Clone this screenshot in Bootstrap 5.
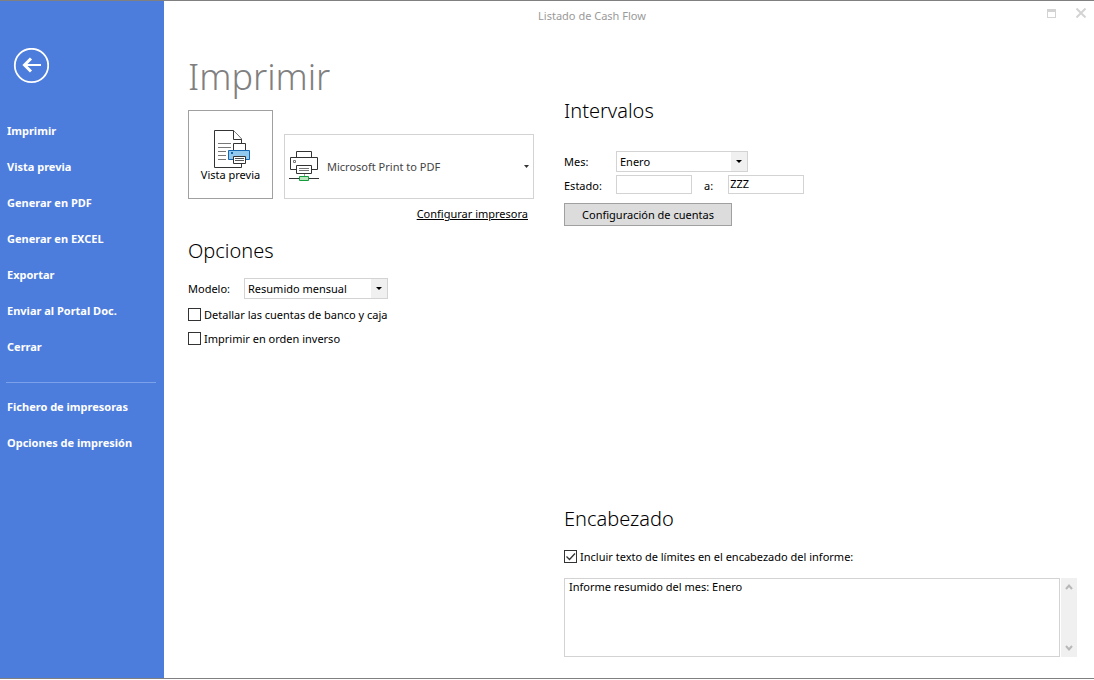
<!DOCTYPE html>
<html lang="es">
<head>
<meta charset="utf-8">
<meta name="viewport" content="width=device-width, initial-scale=1">
<title>Listado de Cash Flow</title>
<link href="https://cdn.jsdelivr.net/npm/bootstrap@5.3.0/dist/css/bootstrap.min.css" rel="stylesheet">
<style>
  body { font-family: "Noto Sans", "Open Sans", sans-serif; font-size: 11px; line-height: 16px; color: #000; background: #fff; }
  .app-window { min-height: calc(100vh - 1px); border-top: 1px solid #808080; border-bottom: 1px solid #808080; }
  .side-menu { width: 164px; flex: none; background: #4d7ddc; padding-top: 47px; }
  .back-btn { width: 36px; height: 36px; margin-left: 13px; margin-bottom: 29px; }
  .side-menu .nav-link { color: #fff; font-size: 11px; font-weight: 700; line-height: 16px; padding: 10px 7px; }
  .side-menu hr { margin: 17px 8px 6px 6px; border-color: #8fb0f0; opacity: .7; }
  .title-bar { height: 30px; color: #9a9a9a; }
  .window-tools { width: 74px; height: 24px; padding-right: 7px; gap: 19px; }
  .sheet { display: grid; grid-template-columns: 346px minmax(0, 1fr); column-gap: 30px; padding: 0 17px 21px 24px; }
  h1 { font-size: 36px; font-weight: 300; line-height: 48px; color: #808080; margin: 22px 0 9px; }
  h2 { font-size: 20px; font-weight: 300; line-height: 28px; margin: 0; }
  .plain-btn { background: none; border: 0; padding: 0; color: inherit; display: flex; }
  .preview-btn { width: 85px; height: 89px; border: 1px solid #a0a0a0; background: #fff; font-size: 11px; line-height: 14px; color: #000; padding: 3px 0 0; }
  .preview-btn svg { margin-left: 3px; }
  .printer-btn { height: 65px; max-width: 250px; border: 1px solid #d3d3d3; background: #fff; color: #444; padding: 0 4px; }
  .setup-link { color: #000; margin: 7px 6px 0 0; }
  .options-title { margin-top: 15px; }
  .model-row { margin-top: 13px; }
  .model-label { width: 56px; }
  .model-combo { width: 144px; }
  .right-side { padding-top: 66px; }
  .combo { appearance: none; height: 21px; border: 1px solid #d3d3d3; border-radius: 0; padding: 0 20px 0 3px; line-height: 19px; color: #000;
    background: #fff url("data:image/svg+xml,%3Csvg xmlns='http://www.w3.org/2000/svg' width='16' height='19'%3E%3Cpath fill='%23f0f0f0' d='M0 0h16v19H0z'/%3E%3Cpath d='M5 8h6L8 11z'/%3E%3C/svg%3E") right center no-repeat; }
  .month-row { margin-top: 26px; }
  .month-combo { width: 132px; }
  .field-row { display: grid; grid-template-columns: 52px auto auto 1fr; align-items: center; }
  .state-row { margin-top: 3px; }
  .state-row label { padding-top: 2px; }
  .state-row .to-label { padding-left: 12px; padding-right: 15px; }
  .entry { width: 76px; height: 19px; border: 1px solid #d3d3d3; padding: 0 1px 2px; }
  .tick { appearance: none; width: 13px; height: 13px; flex: none; margin: 1px 0 0; border: 1px solid #333; background: #fff center no-repeat; }
  .tick:checked { background-image: url("data:image/svg+xml,%3Csvg xmlns='http://www.w3.org/2000/svg' width='11' height='11'%3E%3Cpath d='M1.500 5.500l3 3 5.500-6' fill='none' stroke='%23333' stroke-width='1.300'/%3E%3C/svg%3E"); }
  .tick-row { display: flex; align-items: flex-start; gap: 3px; padding-top: 1px; margin-top: 7px; }
  .accounts-btn { width: 168px; height: 23px; margin-top: 9px; border: 1px solid #a0a0a0; background: #dcdcdc; color: #000; padding: 0; }
  .header-check { margin: 15px 0 13px; }
  .header-text { height: 79px; border: 1px solid #d3d3d3; padding: 0 4px; line-height: 16px; resize: none; overflow: hidden; }
  .scroll-track { width: 16px; margin-left: 1px; background: #f0f0f0; padding: 5px 0; }
</style>
</head>
<body>
<div class="app-window d-flex">
  <nav class="side-menu" aria-label="Menú de impresión">
    <button class="plain-btn back-btn" type="button" aria-label="Volver">
      <svg width="36" height="36" viewBox="0 0 36 36" fill="none" stroke="#fff"><circle cx="18.500" cy="17.500" r="16.700" stroke-width="1.800"/><path d="M28 17H11" stroke-width="2"/><path d="M18 10.500L11.500 17l6.500 6.500" stroke-width="3"/></svg>
    </button>
    <div class="nav flex-column">
      <a class="nav-link" href="#">Imprimir</a>
      <a class="nav-link" href="#">Vista previa</a>
      <a class="nav-link" href="#">Generar en PDF</a>
      <a class="nav-link" href="#">Generar en EXCEL</a>
      <a class="nav-link" href="#">Exportar</a>
      <a class="nav-link" href="#">Enviar al Portal Doc.</a>
      <a class="nav-link" href="#">Cerrar</a>
    </div>
    <hr>
    <div class="nav flex-column">
      <a class="nav-link" href="#">Fichero de impresoras</a>
      <a class="nav-link" href="#">Opciones de impresión</a>
    </div>
  </nav>
  <div class="flex-grow-1 d-flex flex-column">
    <header class="title-bar d-flex">
      <div class="flex-grow-1 text-center align-self-center">Listado de Cash Flow</div>
      <div class="window-tools d-flex justify-content-end align-items-center">
        <button class="plain-btn" type="button" aria-label="Maximizar"><svg width="9" height="9" fill="#d3d3d3"><path fill-rule="evenodd" d="M0 0h9v9H0zM1 3v5h7V3z"/></svg></button>
        <button class="plain-btn" type="button" aria-label="Cerrar ventana"><svg width="12" height="10" fill="none" stroke="#d3d3d3" stroke-width="2"><path d="M1.500.500l9 9M10.500.500l-9 9"/></svg></button>
      </div>
    </header>
    <main class="sheet flex-grow-1">
      <section>
        <h1>Imprimir</h1>
        <div class="d-flex align-items-end">
          <button class="preview-btn d-flex flex-column align-items-center justify-content-center" type="button">
            <svg width="36" height="38" viewBox="1 0 36 38" fill="#fff" stroke="#333">
              <path d="M1.500.500h19l8 8.500v28.500h-27z"/><path d="M20.500.500v9h8"/><path d="M5 13.500h13M5 17.500h13M5 21.500h8M5 25.500h8M5 29.500h8" stroke="#777"/>
              <path d="M20.500 13.500h12v8h-12z"/><path d="M15.500 20.500h21v9h-21z" fill="#93c9ef" stroke="#1567b0"/><path d="M18 22h2v2h-2z" fill="#1567b0" stroke="none"/>
              <path d="M20.500 26.500h12v7h-12z"/><path d="M22 28.500h9M22 30.500h9" stroke="#555"/>
            </svg>
            <span>Vista previa</span>
          </button>
          <button class="printer-btn flex-grow-1 d-flex align-items-center ms-auto" type="button">
            <svg class="me-2" width="30" height="32" viewBox="0 1 30 32" fill="#fff" stroke="#333">
              <path d="M7.500 1.500h15v7h-15z"/><path d="M1.500 7.500h27v12h-27z"/><path d="M4.500 10.500h2v2h-2z" stroke="#777"/><path d="M7.500 15.500h15v8h-15z"/><path d="M10 18.500h10M10 20.500h10" stroke="#777"/><path d="M15.500 24v3" stroke="#999"/><path d="M0 28.500h30"/><path d="M10.500 26.500h9v4h-9z" fill="#b8e6bd" stroke="#149b3c"/>
            </svg>
            <span>Microsoft Print to PDF</span>
            <svg class="ms-auto" width="5" height="3" fill="#333"><path d="M0 0h5L2.500 3z"/></svg>
          </button>
        </div>
        <div class="text-end"><a class="setup-link d-inline-block" href="#">Configurar impresora</a></div>
        <h2 class="options-title">Opciones</h2>
        <div class="model-row d-flex align-items-center">
          <label class="model-label" for="modelo">Modelo:</label>
          <select class="combo model-combo" id="modelo"><option>Resumido mensual</option></select>
        </div>
        <div class="tick-row"><input class="tick" type="checkbox" id="detallar"><label for="detallar">Detallar las cuentas de banco y caja</label></div>
        <div class="tick-row"><input class="tick" type="checkbox" id="inverso"><label for="inverso">Imprimir en orden inverso</label></div>
      </section>
      <div class="right-side d-flex flex-column">
        <section>
          <h2>Intervalos</h2>
          <div class="field-row month-row"><label for="mes">Mes:</label><select class="combo month-combo" id="mes"><option>Enero</option></select></div>
          <div class="field-row state-row"><label for="desde">Estado:</label><input class="entry" id="desde" type="text"><label class="to-label" for="hasta">a:</label><input class="entry" id="hasta" type="text" value="ZZZ"></div>
          <button class="accounts-btn" type="button">Configuración de cuentas</button>
        </section>
        <section class="mt-auto">
          <h2>Encabezado</h2>
          <div class="tick-row header-check"><input class="tick" type="checkbox" id="incluir" checked><label for="incluir">Incluir texto de límites en el encabezado del informe:</label></div>
          <div class="d-flex">
            <textarea class="header-text flex-grow-1" aria-label="Texto del encabezado">Informe resumido del mes: Enero</textarea>
            <div class="scroll-track d-flex flex-column justify-content-between align-items-center">
              <button class="plain-btn" type="button" aria-label="Subir"><svg width="8" height="8" fill="none" stroke="#b8b8b8" stroke-width="2"><path d="M1 6l3-3.500L7 6"/></svg></button>
              <button class="plain-btn" type="button" aria-label="Bajar"><svg width="8" height="8" fill="none" stroke="#b8b8b8" stroke-width="2"><path d="M1 2l3 3.500L7 2"/></svg></button>
            </div>
          </div>
        </section>
      </div>
    </main>
  </div>
</div>
<script src="https://cdn.jsdelivr.net/npm/bootstrap@5.3.0/dist/js/bootstrap.bundle.min.js"></script>
</body>
</html>
